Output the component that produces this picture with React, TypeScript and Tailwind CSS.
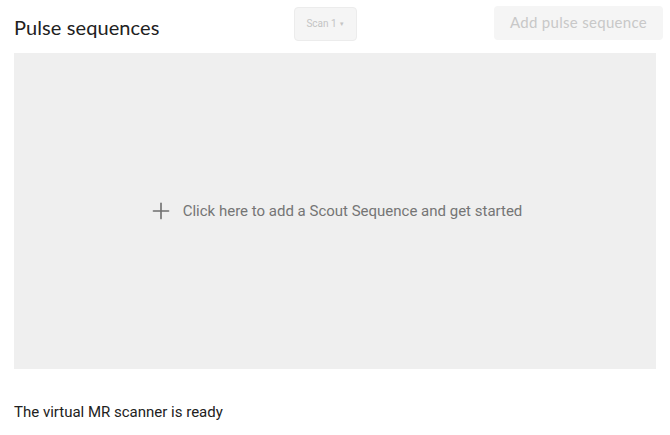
import { Plus } from 'lucide-react';

export default function App() {
  return (
    <div className="min-h-[435px] w-full bg-white font-['Roboto','Liberation_Sans',sans-serif]">
      <div className="flex h-[53px] items-center pl-[14px] pr-[7px]">
        <h1 className="w-[280px] font-['Lato','Open_Sans',sans-serif] text-[20px] leading-none tracking-[0.1px] text-[#212121]">
          Pulse sequences
        </h1>
        <button
          type="button"
          disabled
          className="mt-[-6px] flex h-[34px] w-[63px] items-center justify-center gap-[2px] rounded-[4px] border border-[#ececec] bg-[#f5f5f5] text-[10px] text-[#c4c4c4]"
        >
          Scan 1
          <span className="text-[6px]">▼</span>
        </button>
        <button
          type="button"
          disabled
          className="ml-auto mt-[-8px] h-[34px] w-[169px] rounded-[4px] bg-[#f5f5f5] font-['Lato','Open_Sans',sans-serif] text-[15px] tracking-[0.3px] text-[#c8c8c8]"
        >
          Add pulse sequence
        </button>
      </div>

      <div className="mx-[14px] flex h-[316px] cursor-pointer items-center justify-center gap-[9px] bg-[#efefef] text-[15px] text-[#757575]">
        <Plus className="h-[26px] w-[26px] text-[#6f6f6f]" strokeWidth={1.5} />
        <span>Click here to add a Scout Sequence and get started</span>
      </div>

      <p className="mt-[32px] px-[14px] text-[15px] text-[#212121]">The virtual MR scanner is ready</p>
    </div>
  );
}
